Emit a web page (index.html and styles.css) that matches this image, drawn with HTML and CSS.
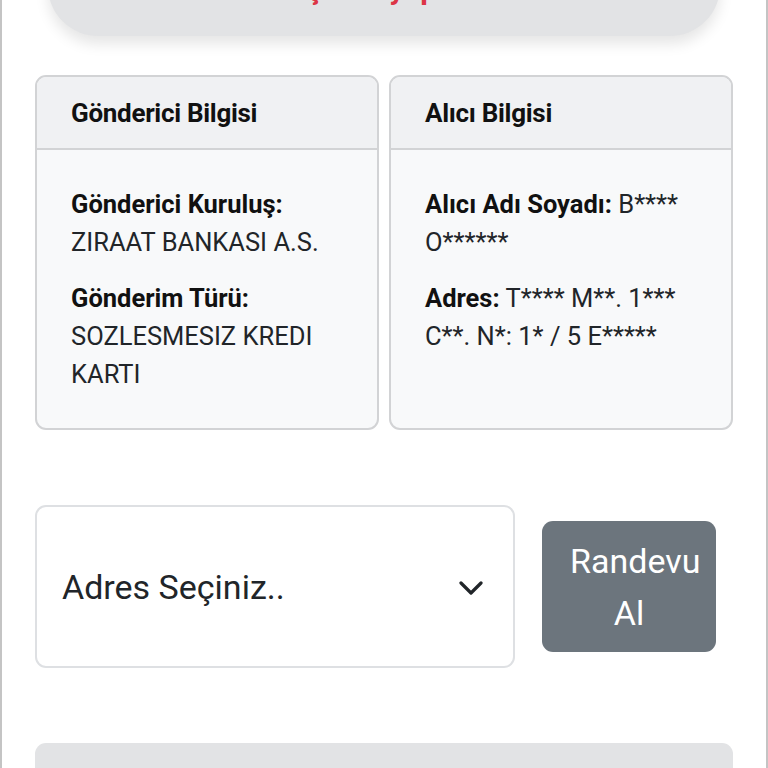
FILE: index.html
```html
<!DOCTYPE html>
<html lang="tr">
<head>
<meta charset="utf-8">
<title>Randevu</title>
<link rel="stylesheet" href="styles.css">
</head>
<body>
<div class="page">
  <div class="notice">
    <span class="notice-text">başvuru yapınız.</span>
  </div>

  <div class="cards">
    <div class="card">
      <div class="card-header">Gönderici Bilgisi</div>
      <div class="card-body">
        <p><b>Gönderici Kuruluş:</b><br>ZIRAAT BANKASI A.S.</p>
        <p><b>Gönderim Türü:</b><br>SOZLESMESIZ KREDI KARTI</p>
      </div>
    </div>
    <div class="card">
      <div class="card-header">Alıcı Bilgisi</div>
      <div class="card-body">
        <p><b>Alıcı Adı Soyadı:</b> B**** O******</p>
        <p><b>Adres:</b> T**** M**. 1*** C**. N*: 1* / 5 E*****</p>
      </div>
    </div>
  </div>

  <div class="actions">
    <div class="select">
      <span class="select-text">Adres Seçiniz..</span>
      <svg class="chevron" width="24" height="16" viewBox="0 0 24 16"><path d="M2 3 L12 13 L22 3" fill="none" stroke="#212529" stroke-width="3.2" stroke-linecap="round" stroke-linejoin="round"/></svg>
    </div>
    <div class="btn">Randevu Al</div>
  </div>

  <div class="bottom-box"></div>
</div>
</body>
</html>
```

FILE: styles.css
```css
html, body {
  margin: 0;
  padding: 0;
  background: #ffffff;
}
body {
  font-family: Roboto, "Noto Sans", "Liberation Sans", sans-serif;
  color: #212529;
}
.page {
  height: 768px;
  overflow: hidden;
  border-left: 2px solid #c4c4c4;
  border-right: 2px solid #c4c4c4;
  box-sizing: border-box;
}
.notice {
  margin: -64px 46px 0 46px;
  height: 100px;
  background: #e2e3e5;
  border-radius: 0 0 50px 50px;
  box-shadow: 0 8px 14px rgba(0, 0, 0, 0.10);
  display: flex;
  align-items: flex-end;
  justify-content: center;
  padding-bottom: 27px;
  box-sizing: border-box;
}
.notice-text {
  color: #dc3545;
  font-weight: 700;
  font-size: 30px;
  line-height: 40px;
}
.cards {
  display: grid;
  grid-template-columns: 1fr 1fr;
  gap: 10px;
  margin: 39px 33px 0 33px;
}
.card {
  border: 2px solid #d2d3d5;
  border-radius: 11px;
  overflow: hidden;
  background: #f8f9fa;
  display: flex;
  flex-direction: column;
}
.card-header {
  background: #f0f1f3;
  border-bottom: 2px solid #d2d3d5;
  height: 73px;
  box-sizing: border-box;
  padding: 0 34px;
  display: flex;
  align-items: center;
  font-weight: 700;
  font-size: 26px;
  letter-spacing: -0.3px;
  color: #111;
}
.card-body {
  flex: 1;
  padding: 35px 26px 35px 34px;
  font-size: 25.5px;
  line-height: 38px;
  color: #212529;
}
.card-body p {
  margin: 0 0 18px 0;
}
.card-body p:last-child {
  margin-bottom: 0;
}
.card-body b {
  font-weight: 700;
  color: #111;
}
.actions {
  display: flex;
  align-items: center;
  gap: 27px;
  margin: 75px 31px 0 33px;
}
.select {
  width: 480px;
  height: 163px;
  flex: none;
  box-sizing: border-box;
  border: 2px solid #dee0e3;
  border-radius: 11px;
  background: #fff;
  display: flex;
  align-items: center;
  justify-content: space-between;
  padding: 0 30px 0 25px;
}
.select-text {
  font-size: 34px;
  color: #212529;
}
.chevron {
  display: block;
  margin-top: 2px;
}
.btn {
  width: 174px;
  height: 131px;
  flex: none;
  box-sizing: border-box;
  padding: 14px 28px 13px 28px;
  background: #6c757d;
  color: #fff;
  border-radius: 11px;
  font-size: 34px;
  line-height: 52px;
  text-align: center;
}
.bottom-box {
  margin: 75px 33px 0 33px;
  height: 120px;
  background: #e2e3e5;
  border-radius: 11px;
}
```
